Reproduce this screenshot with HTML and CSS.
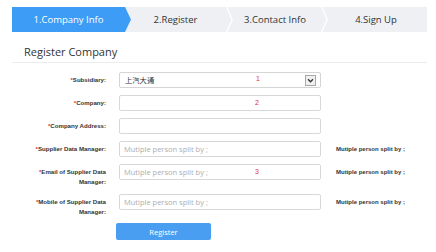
FILE: index.html
```html
<!DOCTYPE html>
<html>
<head>
<meta charset="utf-8">
<link rel="stylesheet" href="styles.css">
</head>
<body>
<div class="page">
  <div class="steps">
    <div class="step step-active">1.Company Info</div>
    <div class="step step-2">2.Register</div>
    <svg class="chev" width="7" height="25" viewBox="0 0 7 25"><polyline points="0.6,0 6.2,12.5 0.6,25" fill="none" stroke="#ffffff" stroke-width="1.3"/></svg>
    <div class="step step-3">3.Contact Info</div>
    <svg class="chev" width="7" height="25" viewBox="0 0 7 25"><polyline points="0.6,0 6.2,12.5 0.6,25" fill="none" stroke="#ffffff" stroke-width="1.3"/></svg>
    <div class="step step-4">4.Sign Up</div>
  </div>

  <h1 class="title">Register Company</h1>

  <div class="form">
    <div class="row">
      <label class="label"><span class="req">*</span>Subsidiary:</label>
      <div class="field">
        <div class="select">
          <span class="select-text">上汽大通</span>
          <svg class="select-btn" width="11" height="11" viewBox="0 0 11 11"><rect x="0.5" y="0.5" width="10" height="10" fill="#f0f0f0" stroke="#a8a8a8"/><polyline points="3,4.2 5.5,6.8 8,4.2" fill="none" stroke="#333" stroke-width="1.3"/></svg>
        </div>
        <span class="mark mark-1">1</span>
      </div>
      <span></span>
    </div>

    <div class="row">
      <label class="label"><span class="req">*</span>Company:</label>
      <div class="field">
        <input class="input" type="text">
        <span class="mark mark-2">2</span>
      </div>
      <span></span>
    </div>

    <div class="row">
      <label class="label"><span class="req">*</span>Company Address:</label>
      <div class="field">
        <input class="input" type="text">
      </div>
      <span></span>
    </div>

    <div class="row">
      <label class="label"><span class="req">*</span>Supplier Data Manager:</label>
      <div class="field">
        <input class="input" type="text" placeholder="Mutiple person split by ;">
      </div>
      <span class="hint">Mutiple person split by ;</span>
    </div>

    <div class="row">
      <label class="label"><span class="req">*</span>Email of Supplier Data Manager:</label>
      <div class="field">
        <input class="input" type="text" placeholder="Mutiple person split by ;">
        <span class="mark mark-3">3</span>
      </div>
      <span class="hint">Mutiple person split by ;</span>
    </div>

    <div class="row">
      <label class="label"><span class="req">*</span>Mobile of Supplier Data Manager:</label>
      <div class="field">
        <input class="input" type="text" placeholder="Mutiple person split by ;">
      </div>
      <span class="hint hint-low">Mutiple person split by ;</span>
    </div>

    <div class="row">
      <span></span>
      <div class="field">
        <button class="btn" type="button">Register</button>
      </div>
      <span></span>
    </div>
  </div>
</div>
</body>
</html>
```

FILE: styles.css
```css
html, body {
  margin: 0;
  padding: 0;
  background: #ffffff;
}

.page {
  padding: 7px 9px 0 12px;
  font-family: "Open Sans", "Liberation Sans", sans-serif;
  color: #333333;
}

.steps {
  display: flex;
  width: 415px;
  height: 25px;
  background: #eef0f4;
}

.step {
  height: 25px;
  display: flex;
  align-items: center;
  justify-content: center;
  box-sizing: border-box;
  font-size: 9.5px;
  color: #333333;
  white-space: nowrap;
}

.step-active {
  width: 119px;
  padding-right: 6px;
  background: #3d9df6;
  color: #ffffff;
  clip-path: polygon(0 0, calc(100% - 6px) 0, 100% 50%, calc(100% - 6px) 100%, 0 100%);
}

.step-2 {
  width: 95px;
  padding-right: 6px;
}

.step-3 {
  width: 88px;
  padding-right: 4px;
}

.step-4 {
  flex: 1;
  padding-right: 3px;
}

.chev {
  display: block;
  flex: none;
}

.title {
  margin: 12px 0 0 0;
  padding: 0 0 3px 12px;
  width: 403px;
  font-size: 11px;
  line-height: 15px;
  font-weight: 400;
  color: #333333;
  border-bottom: 1px solid #ececec;
}

.form {
  margin-top: 9px;
  display: flex;
  flex-direction: column;
  gap: 7px;
}

.row {
  display: grid;
  grid-template-columns: 94px 202px auto;
  column-gap: 13px;
  align-items: start;
}

.label {
  padding-top: 3px;
  text-align: right;
  font-family: "Liberation Sans", Arial, sans-serif;
  font-weight: 700;
  font-size: 6.1px;
  line-height: 10px;
  color: #333333;
  padding-left: 22px;
}

.req {
  color: #e0303a;
}

.field {
  position: relative;
  height: 16px;
}

.select {
  box-sizing: border-box;
  height: 16px;
  border: 1px solid #d5d5d5;
  border-radius: 2px;
  display: flex;
  align-items: center;
  justify-content: space-between;
  padding: 0 4px 0 5px;
}

.select-text {
  font-family: "Noto Sans CJK SC", sans-serif;
  font-size: 7.3px;
  color: #333333;
}

.select-btn {
  display: block;
}

.input {
  box-sizing: border-box;
  display: block;
  width: 202px;
  height: 16px;
  margin: 0;
  padding: 0 0 0 4px;
  border: 1px solid #d8d8d8;
  border-radius: 2px;
  font-family: "Open Sans", sans-serif;
  font-size: 7.5px;
  color: #333333;
  outline: none;
}

.input::placeholder {
  color: #aeaeae;
}

.mark {
  position: absolute;
  font-family: "Liberation Sans", sans-serif;
  font-size: 7px;
  line-height: 8px;
  color: #e0303a;
}

.mark-1 {
  left: 137px;
  top: 3px;
}

.mark-2 {
  left: 136px;
  top: 4px;
}

.mark-3 {
  left: 136px;
  top: 4px;
}

.hint {
  margin-left: 2px;
  padding-top: 3px;
  font-family: "Liberation Sans", Arial, sans-serif;
  font-weight: 700;
  font-size: 6px;
  line-height: 10px;
  color: #333333;
  white-space: nowrap;
}

.btn {
  display: flex;
  align-items: center;
  justify-content: center;
  box-sizing: border-box;
  width: 95px;
  height: 17px;
  margin: -1px 0 0 -3px;
  padding: 0;
  border: 0;
  border-radius: 2px;
  background: #4a9ef2;
  color: #ffffff;
  font-family: "Open Sans", sans-serif;
  font-size: 7.5px;
}
```
